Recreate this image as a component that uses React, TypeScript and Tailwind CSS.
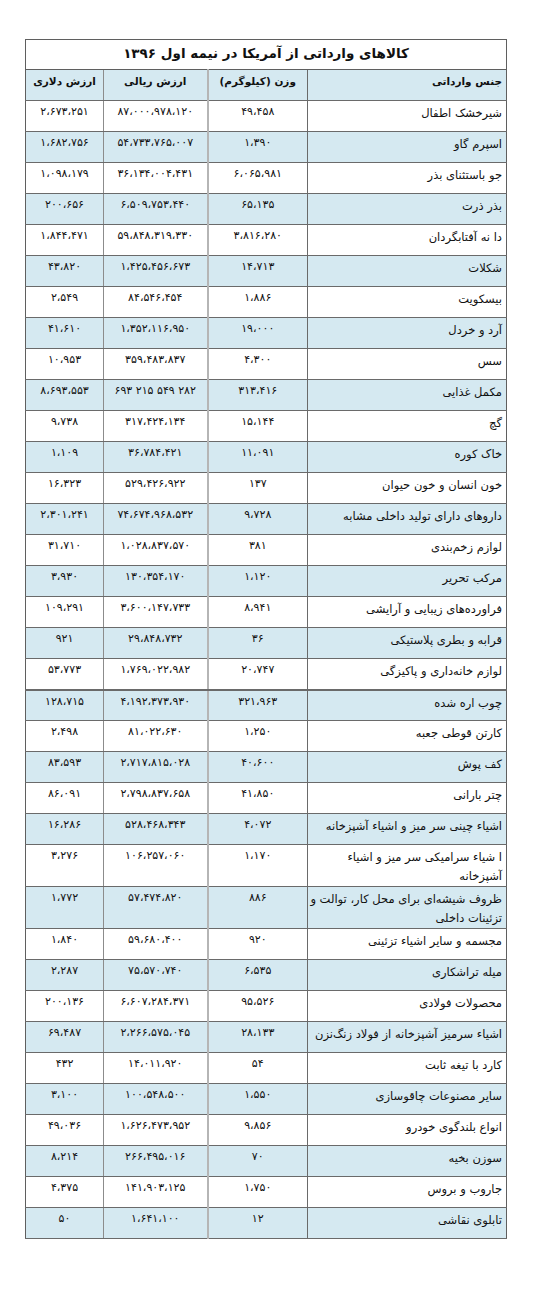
import React from 'react';

type Row = [string, string, string, string, boolean?];

// name, weight (kg), rial value, dollar value, two-line row
const rows: Row[] = [
  ['شیرخشک اطفال', '49,458', '87,000,978,120', '2,673,251'],
  ['اسپرم گاو', '1,390', '54,733,765,007', '1,682,756'],
  ['جو باستثنای بذر', '6,065,981', '36,134,004,431', '1,098,179'],
  ['بذر ذرت', '65,135', '6,509,753,440', '200,656'],
  ['دا نه آفتابگردان', '3,816,280', '59,848,319,330', '1,844,471'],
  ['شکلات', '14,713', '1,425,456,673', '43,820'],
  ['بیسکویت', '1,886', '84,546,454', '2,549'],
  ['آرد و خردل', '19,000', '1,352,116,950', '41,610'],
  ['سس', '4,300', '359,483,837', '10,953'],
  ['مکمل غذایی', '313,416', '693 215 549 282', '8,693,553'],
  ['گچ', '15,144', '317,424,134', '9,738'],
  ['خاک کوره', '11,091', '36,784,421', '1,109'],
  ['خون انسان و خون حیوان', '137', '529,426,922', '16,323'],
  ['داروهای دارای تولید داخلی مشابه', '9,728', '74,674,968,532', '2,301,241'],
  ['لوازم زخم‌بندی', '381', '1,028,837,570', '31,710'],
  ['مرکب تحریر', '1,120', '130,354,170', '3,930'],
  ['فراورده‌های زیبایی و آرایشی', '8,941', '3,600,147,733', '109,291'],
  ['قرابه و بطری پلاستیکی', '36', '29,848,732', '921'],
  ['لوازم خانه‌داری و پاکیزگی', '20,747', '1,769,022,982', '53,773'],
  ['چوب اره شده', '321,963', '4,192,373,930', '128,715'],
  ['کارتن قوطی جعبه', '1,250', '81,022,630', '2,498'],
  ['کف پوش', '40,600', '2,717,815,028', '83,593'],
  ['چتر بارانی', '41,850', '2,798,837,658', '86,091'],
  ['اشیاء چینی سر میز و اشیاء آشپزخانه', '4,072', '528,468,343', '16,286'],
  ['ا شیاء سرامیکی سر میز و اشیاء', '1,170', '106,257,060', '3,276', true],
  ['ظروف شیشه‌ای برای محل کار، توالت و', '886', '57,474,820', '1,772', true],
  ['مجسمه و سایر اشیاء تزئینی', '920', '59,680,400', '1,840'],
  ['میله تراشکاری', '6,535', '75,570,740', '2,287'],
  ['محصولات فولادی', '95,526', '6,607,284,371', '200,136'],
  ['اشیاء سرمیز آشپزخانه از فولاد زنگ‌نزن', '28,133', '2,266,575,045', '69,487'],
  ['کارد با تیغه ثابت', '54', '14,011,920', '432'],
  ['سایر مصنوعات چاقوسازی', '1,550', '100,548,500', '3,100'],
  ['انواع بلندگوی خودرو', '9,856', '1,626,473,952', '49,036'],
  ['سوزن بخیه', '70', '266,495,016', '8,214'],
  ['جاروب و بروس', '1,750', '141,903,125', '4,375'],
  ['تابلوی نقاشی', '12', '1,641,100', '50'],
];

// second lines of the two tall rows
const secondLine: Record<number, string> = {
  24: 'آشپزخانه',
  25: 'تزئینات داخلی',
};

const fa = (s: string) =>
  s.replace(/[0-9]/g, (d) => '۰۱۲۳۴۵۶۷۸۹'[Number(d)]).replace(/,/g, '،');

const font = { fontFamily: '"DejaVu Sans", sans-serif' };

export default function App() {
  return (
    <div className="min-h-[1296px] bg-white pt-[39px] pl-[25px]" style={font}>
      <table
        dir="rtl"
        className="w-[481px] table-fixed border-collapse border border-[#5f5f5f] text-[#111]"
      >
        <colgroup>
          <col className="w-[199px]" />
          <col className="w-[100px]" />
          <col className="w-[104px]" />
          <col className="w-[78px]" />
        </colgroup>
        <thead>
          <tr className="h-[30px]">
            <th
              colSpan={4}
              className="border-b border-[#5f5f5f] pb-[2px] text-center align-middle text-[13.5px] font-bold"
            >
              کالاهای وارداتی از آمریکا در نیمه اول ۱۳۹۶
            </th>
          </tr>
          <tr className="h-[31px] bg-[#d5e9f1] text-[10.5px] font-bold">
            <th className="border-b border-l border-[#6a6a6a] pt-[4px] pr-[4px] text-right align-top">
              جنس وارداتی
            </th>
            <th className="border-b border-l-2 border-b-[#6a6a6a] border-l-[#b5b5b5] pt-[4px] text-center align-top">
              وزن (کیلوگرم)
            </th>
            <th className="border-b border-l border-b-[#6a6a6a] border-l-[#8c8c8c] pt-[4px] text-center align-top">
              ارزش ریالی
            </th>
            <th className="border-b border-[#6a6a6a] pt-[4px] text-center align-top">
              ارزش دلاری
            </th>
          </tr>
        </thead>
        <tbody>
          {rows.map(([name, kg, rial, usd, tall], i) => {
            const bottom = i === 18 ? 'border-b-2' : 'border-b';
            return (
              <tr
                key={i}
                className={
                  (i % 2 === 1 ? 'bg-[#d5e9f1] ' : 'bg-white ') +
                  (tall ? 'h-[40px]' : 'h-[31px]')
                }
              >
                <td
                  className={
                    'border-l border-[#6a6a6a] pt-[3px] pr-[4px] text-right align-top text-[11.5px] leading-[19px] whitespace-nowrap ' +
                    bottom
                  }
                >
                  <div>{name}</div>
                  {tall && <div>{secondLine[i]}</div>}
                </td>
                <td
                  dir="ltr"
                  className={
                    'border-l-2 border-b-[#6a6a6a] border-l-[#b5b5b5] pt-[3px] text-center align-top text-[11px] leading-[16px] ' +
                    bottom
                  }
                >
                  {fa(kg)}
                </td>
                <td
                  dir="ltr"
                  className={
                    'border-l border-b-[#6a6a6a] border-l-[#8c8c8c] pt-[3px] text-center align-top text-[11px] leading-[16px] ' +
                    bottom
                  }
                >
                  {fa(rial)}
                </td>
                <td
                  dir="ltr"
                  className={
                    'border-[#6a6a6a] pt-[3px] text-center align-top text-[11px] leading-[16px] ' +
                    bottom
                  }
                >
                  {fa(usd)}
                </td>
              </tr>
            );
          })}
        </tbody>
      </table>
    </div>
  );
}
